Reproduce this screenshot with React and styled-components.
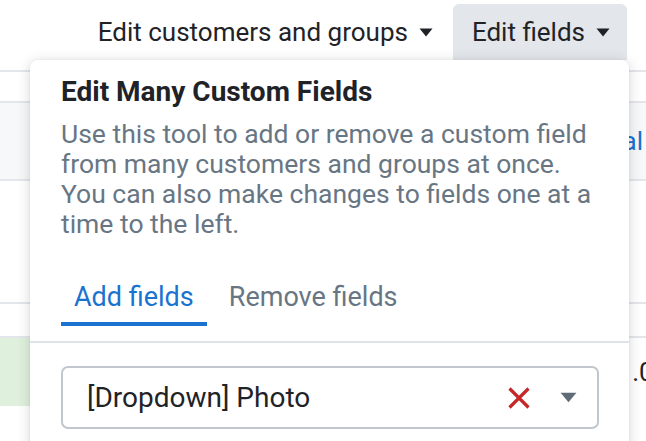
import { styled, createGlobalStyle } from 'styled-components';

const GlobalStyle = createGlobalStyle`
  html, body {
    margin: 0;
    padding: 0;
    background: #ffffff;
    font-family: Roboto, "Liberation Sans", sans-serif;
    overflow: hidden;
  }
  #root {
    width: 646px;
    height: 441px;
  }
`;

const Caret = ({ color = '#1f2328', width = 14 }) => (
  <svg width={width} height={Math.round(width * 0.65)} viewBox="0 0 14 9">
    <path d="M0.5 0.5 L13.5 0.5 L7 8.5 Z" fill={color} />
  </svg>
);

const CloseIcon = () => (
  <svg width="24" height="24" viewBox="0 0 24 24">
    <path
      d="M2.5 2.5 L21.5 21.5 M21.5 2.5 L2.5 21.5"
      stroke="#c62828"
      strokeWidth="3.2"
      fill="none"
    />
  </svg>
);

const App = () => {
  return (
    <Page>
      <GlobalStyle />
      <Toolbar>
        <MenuButton>
          Edit customers and groups <Caret />
        </MenuButton>
        <MenuButton $open>
          Edit fields <Caret />
        </MenuButton>
      </Toolbar>

      <Table>
        <Row $height={31} />
        <Row $height={78} $shade="#f7f8fa">
          <Cell $align="right">
            <LinkText>Global</LinkText>
          </Cell>
        </Row>
        <Row $height={123} />
        <Row $height={34} />
        <Row $height={70}>
          <GreenCell />
          <Cell $align="left">
            <ValueText>$1.00</ValueText>
          </Cell>
        </Row>
      </Table>

      <Popover>
        <Header>
          <Title>Edit Many Custom Fields</Title>
          <Description>
            Use this tool to add or remove a custom field from many customers
            and groups at once. You can also make changes to fields one at a
            time to the left.
          </Description>
          <Tabs>
            <Tab $active>Add fields</Tab>
            <Tab>Remove fields</Tab>
          </Tabs>
        </Header>
        <Body>
          <Select>
            <SelectValue>[Dropdown] Photo</SelectValue>
            <SelectActions>
              <CloseIcon />
              <Caret color="#5f6b76" width={17} />
            </SelectActions>
          </Select>
        </Body>
      </Popover>
    </Page>
  );
};

const Page = styled.div`
  position: relative;
  width: 646px;
  height: 441px;
  overflow: hidden;
`;

const Toolbar = styled.div`
  height: 60px;
  display: flex;
  justify-content: flex-end;
  align-items: flex-end;
  gap: 3px;
  padding-right: 19px;
  box-sizing: border-box;
`;

const MenuButton = styled.div`
  height: 56px;
  display: flex;
  align-items: center;
  gap: 11px;
  padding: 0 17px 0 19px;
  font-size: 26px;
  color: #1f2328;
  background: ${(p) => (p.$open ? '#e3e6ea' : 'transparent')};
  border-radius: 6px 6px 0 0;
  box-sizing: border-box;
  white-space: nowrap;
`;

const Table = styled.div`
  display: flex;
  flex-direction: column;
  padding-top: 10px;
`;

const Row = styled.div`
  height: ${(p) => p.$height}px;
  display: flex;
  background: ${(p) => p.$shade || 'transparent'};
  border-top: 2px solid #e3e6ea;
  box-sizing: border-box;
`;

const Cell = styled.div`
  flex: 1;
  display: flex;
  align-items: center;
  justify-content: ${(p) => (p.$align === 'right' ? 'flex-end' : 'flex-start')};
  padding: ${(p) => (p.$align === 'right' ? '0 3px 0 0' : '0 0 0 3px')};
  white-space: nowrap;
`;

const GreenCell = styled.div`
  width: 600px;
  flex-shrink: 0;
  background: #dff1dc;
`;

const LinkText = styled.span`
  font-size: 26px;
  color: #1a73d0;
`;

const ValueText = styled.span`
  font-size: 26px;
  color: #1f2328;
`;

const Popover = styled.div`
  position: absolute;
  top: 60px;
  left: 30px;
  width: 599px;
  height: 400px;
  background: #ffffff;
  border-radius: 8px;
  box-shadow: 0 2px 14px rgba(0, 0, 0, 0.16), 0 0 3px rgba(0, 0, 0, 0.06);
`;

const Header = styled.div`
  padding: 16px 30px 0 31px;
  border-bottom: 2px solid #dfe3e8;
`;

const Title = styled.div`
  font-size: 28px;
  font-weight: 700;
  color: #1f2328;
  line-height: 32px;
`;

const Description = styled.div`
  margin-top: 11px;
  font-size: 26.5px;
  line-height: 30px;
  color: #687684;
`;

const Tabs = styled.div`
  display: flex;
  gap: 9px;
  margin-top: 41px;
  padding-bottom: 15px;
`;

const Tab = styled.div`
  padding: 0 13px 8px;
  font-size: 27px;
  line-height: 34px;
  color: ${(p) => (p.$active ? '#1a73d0' : '#687684')};
  border-bottom: 4px solid ${(p) => (p.$active ? '#1a73d0' : 'transparent')};
`;

const Body = styled.div`
  padding: 23px 30px 0 31px;
`;

const Select = styled.div`
  height: 63px;
  display: flex;
  align-items: center;
  justify-content: space-between;
  padding: 0 20px 0 24px;
  border: 2px solid #c0c7ce;
  border-radius: 7px;
  box-sizing: border-box;
`;

const SelectValue = styled.span`
  font-size: 28px;
  color: #1f2328;
`;

const SelectActions = styled.div`
  display: flex;
  align-items: center;
  gap: 29px;
`;

export default App;
